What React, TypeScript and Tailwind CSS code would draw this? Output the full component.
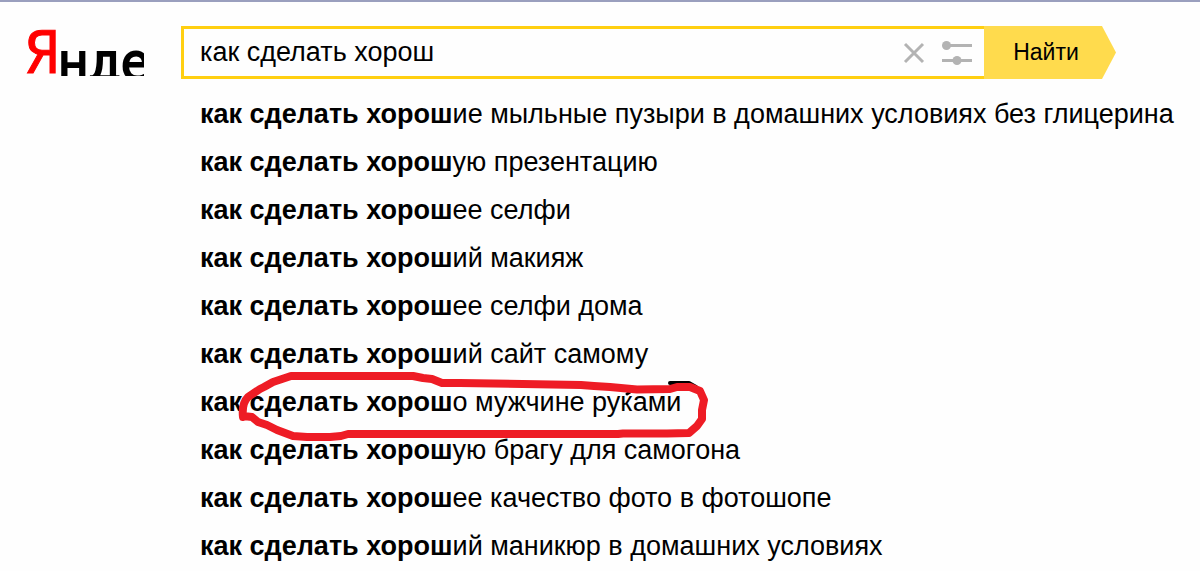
const query = 'как сделать хорош';

const suggestions = [
  'ие мыльные пузыри в домашних условиях без глицерина',
  'ую презентацию',
  'ее селфи',
  'ий макияж',
  'ее селфи дома',
  'ий сайт самому',
  'о мужчине руками',
  'ую брагу для самогона',
  'ее качество фото в фотошопе',
  'ий маникюр в домашних условиях',
];

const markedIndex = 6;

function Logo() {
  return (
    <a
      href="#"
      aria-label="Яндекс"
      className="flex h-[50px] w-[120px] shrink-0 items-start overflow-hidden whitespace-nowrap font-['DejaVu_Sans_Condensed','DejaVu_Sans',sans-serif]"
    >
      <span className="w-[34px] shrink-0 text-[58px] leading-[54px] text-[#ff0000] [-webkit-text-stroke:1px_#ff0000]">
        Я
      </span>
      <span className="pt-2 text-[52px] leading-[56px] text-black [-webkit-text-stroke:2px_#000]">
        нде
      </span>
    </a>
  );
}

function Marker() {
  return (
    <svg
      aria-hidden="true"
      className="pointer-events-none absolute -top-[10px] left-[38px] h-[74px] w-[472px]"
      viewBox="238 368 472 74"
      fill="none"
      strokeLinecap="round"
      strokeLinejoin="round"
    >
      <path d="M670 383H689L696 387" stroke="#000" strokeWidth="4" />
      <path d="M627 394l3-2" stroke="#000" strokeWidth="3" />
      <path
        d="M243 417C242 408 243 402 248 397L260 389L264 387L273 382L282 379L291 376H413L423 378L432 379L442 383H460L581 385L594 386L610 387L637 389.500L670 389L677 387H690L700 391L704 400L702 410L702 419L697 426L689 433L667 433.500H623L618 434H348L341 436L330 437H307L293 436L277 430L267 425L258 422L252 417L243 416"
        stroke="#ee1c25"
        strokeWidth="8"
      />
    </svg>
  );
}

export default function App() {
  return (
    <div className="min-h-screen overflow-hidden border-t-2 border-[#9a9fbe] bg-[#fefefe] font-['Liberation_Sans',Arial,sans-serif] text-[27px] text-black">
      <header className="flex pt-6 pr-[84px] pl-6">
        <Logo />
        <form className="ml-[37px] flex h-[53px] grow" onSubmit={(e) => e.preventDefault()}>
          <div className="flex min-w-0 grow items-center border-y-3 border-l-3 border-[#ffcf10] pr-3 pl-4">
            <input
              aria-label="Поиск"
              defaultValue={query}
              className="min-w-0 grow bg-transparent outline-none"
            />
            <button type="button" aria-label="Очистить" className="shrink-0">
              <svg className="h-6 w-6" viewBox="0 0 24 24" stroke="#b3b3b3" strokeWidth="3">
                <path d="M3 3L21 21M21 3L3 21" />
              </svg>
            </button>
            <button type="button" aria-label="Настройки поиска" className="ml-4 shrink-0">
              <svg className="h-6 w-[30px]" viewBox="0 0 30 24" stroke="#b3b3b3" strokeWidth="3">
                <path d="M4 4.500H30M0 19.500H30" />
                <circle cx="4.500" cy="4.500" r="4.500" fill="#b3b3b3" stroke="none" />
                <circle cx="15" cy="19.500" r="4.500" fill="#b3b3b3" stroke="none" />
              </svg>
            </button>
          </div>
          <button
            type="submit"
            className="w-[132px] shrink-0 bg-[#ffdb4d] pr-2 text-[23px] [clip-path:polygon(0_0,118px_0,100%_50%,118px_100%,0_100%)]"
          >
            Найти
          </button>
        </form>
      </header>
      <ul className="mt-[11px] pl-[200px]">
        {suggestions.map((ending, index) => (
          <li key={ending} className="relative leading-[48px] whitespace-nowrap">
            <a href="#">
              <b>{query}</b>
              {ending}
            </a>
            {index === markedIndex && <Marker />}
          </li>
        ))}
      </ul>
    </div>
  );
}
